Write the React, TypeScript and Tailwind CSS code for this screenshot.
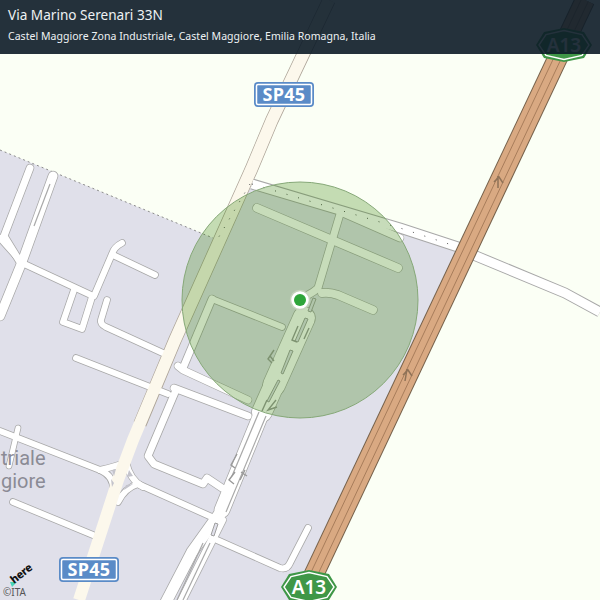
const roads = [
  // top left cluster
  { d: 'M30,168 L4,236 L20,262', w: 7 },
  { d: 'M53,176 L22,262 L0,316', w: 9 },
  { d: 'M20,262 L93,296', w: 6 },
  { d: 'M0,238 L16,256', w: 6 },
  { d: 'M122,243 Q114,247 112,254 L94,296', w: 6 },
  { d: 'M113,255 L155,275', w: 6 },
  { d: 'M74,290 L63,322 L82,329 L92,297', w: 6 },
  { d: 'M107,300 L101,320 Q100,324 106,327 L165,354', w: 6 },
  { d: 'M76,358 L168,394', w: 6 },
  // below the circle
  { d: 'M176,390 L148,456 L154,464 L203,484 L207,478 L222,488', w: 7 },
  { d: 'M178,366 L183,370 L248,400', w: 7 },
  { d: 'M174,388 L248,416', w: 7 },
  { d: 'M0,431 L100,470', w: 6 },
  { d: 'M13,502 L93,535', w: 6 },
  { d: 'M18,428 L9,466', w: 5 },
  { d: 'M138,484 L214,518', w: 6 },
  { d: 'M217,540 L280,568 Q287,570 290,563 L308,528', w: 6 },
  // junction
  { d: 'M100,470 Q114,476 113,490', w: 6 },
  { d: 'M138,484 Q125,488 118,502', w: 6 },
  { d: 'M100,470 Q118,466 126,462', w: 6 },
  { d: 'M126,462 Q130,480 143,487', w: 6 },
  // double carriageway
  { d: 'M304,318 L274,385', w: 22 },
  { d: 'M274,385 L262,412', w: 20 },
  { d: 'M262,412 L222,510', w: 15 },
  { d: 'M222,510 L192,552 L165,604', w: 11 },
  { d: 'M222,520 L180,604', w: 8 },
  { d: 'M212,299 L183,368', w: 7 },
  { d: 'M212,299 L282,327', w: 6 },
  // inside the circle
  { d: 'M257,208 L398,268', w: 8 },
  { d: 'M340,214 L318,288 Q314,292 306,296', w: 7 },
  { d: 'M322,293 Q330,292 338,295 L373,310', w: 8 },
  { d: 'M343,213 L400,238', w: 7 },
]

const dottedRoad = 'M252,184 L400,228 L458,247 L476,256 L565,293 L600,312'
const sp45 = 'M329,0 L272,120 L251,170 L175,340 L133,440 L118,480 L79,600'

const lines = [
  'M259,412 L232,476',
  'M266,416 L226,512',
  'M203,543 L177,600',
  'M210,543 L183,600',
  'M50,184 L34,226',
]

const islands = [
  '313,298 316,299 311,312 308,311',
  '305,318 308,319 298,342 295,341',
  '290,350 293,351 283,374 281,373',
  '278,380 280,381 269,402 267,401',
  '215,523 218,524 214,536 211,535',
]

const marks = [
  'M274,350 L268,359 L272,363 M270,356 L274,361',
  'M298,326 L292,340 L297,342',
  'M309,328 L304,339',
  'M237,454 L231,465 L235,468',
  'M235,472 L229,480 L234,484',
  'M245,470 L240,480 M241,472 L247,476',
  'M267,400 L262,411 M276,400 L268,410 L277,407',
]

const Shield = ({ x, y, label }: { x: number; y: number; label: string }) => (
  <g transform={`translate(${x} ${y})`}>
    <rect x="0" y="0" width="60" height="25" rx="4" fill="#5a8bc7" />
    <rect x="2.5" y="2.5" width="55" height="20" rx="1.5" fill="#5a8bc7" stroke="#fff" strokeWidth="1.5" />
    <text x="30" y="18.5" textAnchor="middle" fill="#fff" fontSize="18" fontWeight="700" letterSpacing="0.3" fontFamily="'Noto Sans', sans-serif">
      {label}
    </text>
  </g>
)

const Motorway = ({ x, y }: { x: number; y: number }) => (
  <g transform={`translate(${x} ${y})`}>
    <polygon points="0,17 8,4 28,0 48,4 56,17 48,30 28,34 8,30" fill="#3f9747" />
    <polygon points="3,17 10,6.5 28,2.5 46,6.5 53,17 46,27.5 28,31.5 10,27.5" fill="#3f9747" stroke="#fff" strokeWidth="1.4" />
    <text x="28" y="24" textAnchor="middle" fill="#fff" fontSize="19" fontWeight="600" fontFamily="'Noto Sans', sans-serif">
      A13
    </text>
  </g>
)

export default function App() {
  return (
    <div className="relative h-[600px] w-[600px] overflow-hidden bg-[#fbfff5]">
      <svg width="600" height="600" viewBox="0 0 600 600" className="block">
        {/* industrial area */}
        <polygon points="0,150 213,238 252,186 400,228 460,250 300,600 0,600" fill="#e0e0ea" />
        <path d="M0,150 L213,238" fill="none" stroke="#8a8a8a" strokeWidth="1" strokeDasharray="2 3" />

        {roads.map((r, i) => (
          <path key={`c${i}`} d={r.d} fill="none" stroke="#a8a8a8" strokeWidth={r.w + 1.5} strokeLinecap="round" strokeLinejoin="round" />
        ))}
        <path d={dottedRoad} fill="none" stroke="#a8a8a8" strokeWidth="11" strokeLinejoin="round" />
        <path d="M329,0 L272,120 L251,170 L175,340 L140,424" fill="none" stroke="#ada498" strokeWidth="13.5" />

        {roads.map((r, i) => (
          <path key={`f${i}`} d={r.d} fill="none" stroke="#fff" strokeWidth={r.w} strokeLinecap="round" strokeLinejoin="round" />
        ))}
        <path d={dottedRoad} fill="none" stroke="#fff" strokeWidth="9" strokeLinejoin="round" />
        <path d={sp45} fill="none" stroke="#fcf8ec" strokeWidth="12" />

        {/* islands at the junction */}
        <polygon points="112,470 116,469 114,476" fill="#c4c4cc" />
        <polygon points="129,470 133,476 127,477" fill="#c4c4cc" />
        <polygon points="111,479 114,483 112,487" fill="#c4c4cc" />
        <polygon points="126,485 133,484 124,490" fill="#c4c4cc" />

        {lines.map((d, i) => (
          <path key={i} d={d} fill="none" stroke="#a9a9a9" strokeWidth="1.2" />
        ))}
        {islands.map((p, i) => (
          <polygon key={i} points={p} fill="#e0e0ea" stroke="#a0a0a0" strokeWidth="1" />
        ))}

        {/* dotted tracks */}
        <path d="M252,184 L400,228 L458,247" fill="none" stroke="#555" strokeWidth="1" strokeDasharray="1 11" />
        <path d="M250,184 L217,240" fill="none" stroke="#555" strokeWidth="1" strokeDasharray="1 9" />

        {marks.map((d, i) => (
          <path key={i} d={d} fill="none" stroke="#999" strokeWidth="1.4" />
        ))}

        {/* A13 */}
        <path d="M585,0 L300,604" fill="none" stroke="#75604a" strokeWidth="20.5" />
        <path d="M585,0 L300,604" fill="none" stroke="#d9a982" strokeWidth="18.5" />
        <path d="M588.2,1.5 L303.2,605.5" fill="none" stroke="#a87d5b" strokeWidth="1" />
        <path d="M581.8,-1.5 L296.8,602.5" fill="none" stroke="#a87d5b" strokeWidth="1" />
        <path d="M498,176 L498,188 M494,182 L499,177 L503,183" fill="none" stroke="#8f7257" strokeWidth="1.5" />
        <path d="M407,369 L405,381 M403,375 L408,370 L412,376" fill="none" stroke="#8f7257" strokeWidth="1.5" />

        {/* accuracy circle */}
        <circle cx="300" cy="300" r="118" fill="#368206" fillOpacity="0.28" stroke="#86a878" strokeWidth="1" />

        {/* marker */}
        <circle cx="300" cy="300" r="9.5" fill="#fff" stroke="#c4d2bc" strokeWidth="1.5" />
        <circle cx="300" cy="300" r="6" fill="#2ea53a" />

        <Shield x={254} y={82} label="SP45" />
        <Shield x={59} y={557} label="SP45" />
        <Motorway x={536} y={28} />
        <Motorway x={281} y={570} />

        {/* here logo */}
        <polygon points="10,582 17,582 12,587" fill="#48d4b8" />
        <text x="14" y="584" transform="rotate(-38 14 584)" fontSize="11" fontWeight="800" letterSpacing="-0.3" fill="#111" fontFamily="'Noto Sans', sans-serif">here</text>
      </svg>

      <div className="absolute left-px top-[447px] font-['Roboto',sans-serif] text-[20px] leading-[23px] text-[#8b8b95]">
        <div>triale</div>
        <div>giore</div>
      </div>

      <span className="absolute left-[3px] top-[586px] font-['Noto_Sans',sans-serif] text-[10px] leading-[12px] text-[#555]">©ITA</span>

      <div className="absolute inset-x-0 top-0 flex h-[54px] flex-col gap-[5px] bg-[#0c1b27]/90 px-2 pt-[6px] font-['Noto_Sans',sans-serif] text-[#eef1f3]">
        <div className="text-[13.6px] leading-[18px]">Via Marino Serenari 33N</div>
        <div className="text-[10.5px] leading-[15px] tracking-[0.04px]">Castel Maggiore Zona Industriale, Castel Maggiore, Emilia Romagna, Italia</div>
      </div>
    </div>
  )
}
